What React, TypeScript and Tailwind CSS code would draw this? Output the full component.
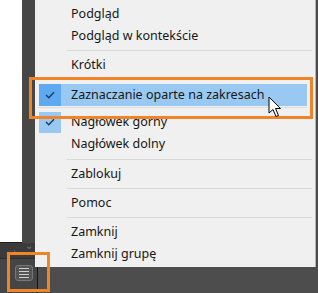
import type { ReactNode } from 'react';

function Check() {
  return (
    <svg width="10" height="8" viewBox="0 0 10 8" fill="none">
      <polyline points="1,4 3.8,6.8 9,1.2" stroke="#1d3b5b" strokeWidth="1.4" />
    </svg>
  );
}

function Item({ children }: { children: ReactNode }) {
  return <div className="flex h-[22px] items-center pl-[36px]">{children}</div>;
}

function Sep({ top = 3, h = 7 }: { top?: number; h?: number }) {
  return (
    <div className={h === 8 ? 'h-[8px]' : 'h-[7px]'}>
      <div className={`${top === 4 ? 'mt-[4px]' : 'mt-[3px]'} ml-[32px] mr-[3px] h-px bg-[#d9d9d9]`} />
    </div>
  );
}

export default function App() {
  return (
    <div
      className="relative flex h-[293px] w-[318px] overflow-hidden bg-[#4b4b4b] text-[12.5px] text-[#161616]"
      style={{ fontFamily: '"Noto Sans", "Liberation Sans", sans-serif' }}
    >
      {/* left dock */}
      <div className="flex w-[35px] flex-col">
        <div className="flex h-[243px]">
          <div className="w-[22px] border-b border-[#1e1e1e] bg-white" />
          <div className="flex-1 bg-[#474747]" />
        </div>
        <div className="relative h-[15px] bg-[#3b3b3b]">
          <span className="absolute left-[25px] top-[-5px] text-[10px] text-[#777]">⌄</span>
          <span className="absolute left-[13px] top-[1px] text-[10px] text-[#666]">›</span>
        </div>
        <div className="flex flex-1 items-start border-t border-[#2e2e2e] bg-[#454545] pl-[15px] pt-[6px]">
          <div className="flex h-[16px] w-[18px] flex-col items-center justify-center gap-[2px] rounded-[3px] border border-[#777] bg-[#555]">
            <div className="h-px w-[10px] bg-[#d0d0d0]" />
            <div className="h-px w-[10px] bg-[#d0d0d0]" />
            <div className="h-px w-[10px] bg-[#d0d0d0]" />
            <div className="h-px w-[10px] bg-[#d0d0d0]" />
          </div>
        </div>
      </div>

      {/* menu column */}
      <div className="flex flex-1 flex-col">
        <div className="flex h-[267px] w-[281px] flex-col border-r border-[#b4b4b4] bg-[#f0f0f0] pt-[3px]">
          <Item>Podgląd</Item>
          <Item>Podgląd w kontekście</Item>
          <Sep />
          <Item>Krótki</Item>
          <div className="h-[8px]" />
          <div className="ml-[4px] mr-[8px] flex h-[22px] items-center bg-[#99c9f3]">
            <div className="flex h-full w-[22px] items-center justify-center bg-[#5eaaf0]">
              <Check />
            </div>
            <span className="pl-[10px]">Zaznaczanie oparte na zakresach</span>
          </div>
          <div className="h-[5px]">
            <div className="ml-[3px] mr-[8px] mt-[1px] h-px bg-[#dedede]" />
          </div>
          <div className="flex h-[22px] items-center pl-[4px]">
            <div className="flex h-[21px] w-[22px] items-center justify-center bg-[#99c9f3]">
              <Check />
            </div>
            <span className="pl-[10px]">Nagłówek górny</span>
          </div>
          <Item>Nagłówek dolny</Item>
          <Sep top={4} h={8} />
          <Item>Zablokuj</Item>
          <Sep />
          <Item>Pomoc</Item>
          <Sep />
          <Item>Zamknij</Item>
          <Item>Zamknij grupę</Item>
        </div>
        <div className="flex flex-1">
          <div className="w-[2px] bg-[#454545]" />
          <div className="w-px bg-[#161616]" />
          <div className="flex-1 bg-[#4d4d4d]" />
        </div>
      </div>

      {/* annotations */}
      <div className="absolute left-[29px] top-[77px] h-[42px] w-[284px] border-[3px] border-[#ef8428]" />
      <div className="absolute left-[7px] top-[252px] h-[40px] w-[43px] border-[3px] border-[#ef8428]" />
      <svg className="absolute left-[268px] top-[96px]" width="15" height="22" viewBox="0 0 15 22">
        <path d="M1 1 L1 17 L5 13.5 L8 20.5 L10.5 19.5 L7.5 12.5 L12.5 12.5 Z" fill="#fff" stroke="#000" strokeWidth="1" strokeLinejoin="miter" />
      </svg>
    </div>
  );
}
